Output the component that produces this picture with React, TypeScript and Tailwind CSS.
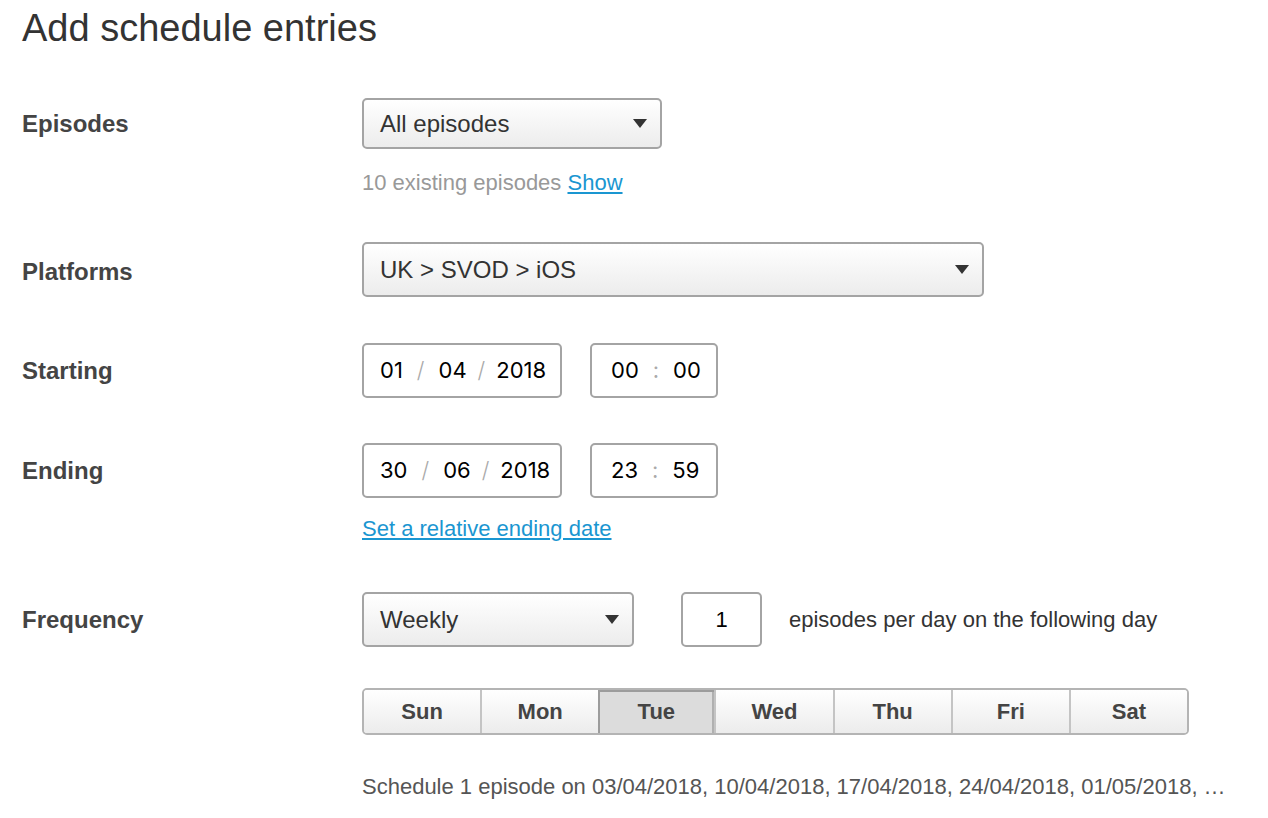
import React from 'react';

const labelCls = "w-[340px] shrink-0 flex items-center text-[24px] font-bold text-[#444]";

function Caret() {
  return (
    <svg width="14" height="9" viewBox="0 0 14 9" className="shrink-0">
      <path d="M0 0 H14 L7 9 Z" fill="#333" />
    </svg>
  );
}

function Select({ value, width, height }: { value: string; width: string; height: string }) {
  return (
    <div
      className={`${width} ${height} flex items-center justify-between pl-[16px] pr-[13px] rounded-[5px] border-2 border-[#a4a4a4] bg-gradient-to-b from-white to-[#ececec] text-[24px] text-[#333]`}
    >
      <span>{value}</span>
      <Caret />
    </div>
  );
}

function DateBox({ d, m, y }: { d: string; m: string; y: string }) {
  return (
    <div className="w-[200px] h-[55px] flex items-center pl-[16px] rounded-[5px] border-2 border-[#a4a4a4] bg-white font-['Inter',sans-serif] text-[22px] text-black">
      <span>{d}</span>
      <span className="mx-[14px] text-[#aaa] font-light">/</span>
      <span>{m}</span>
      <span className="mx-[11px] text-[#aaa] font-light">/</span>
      <span>{y}</span>
    </div>
  );
}

function TimeBox({ h, m }: { h: string; m: string }) {
  return (
    <div className="w-[128px] h-[55px] ml-[28px] flex items-center pl-[19px] rounded-[5px] border-2 border-[#a4a4a4] bg-white font-['Inter',sans-serif] text-[22px] text-black">
      <span>{h}</span>
      <span className="mx-[14px] text-[#aaa]">:</span>
      <span>{m}</span>
    </div>
  );
}

const days = ['Sun', 'Mon', 'Tue', 'Wed', 'Thu', 'Fri', 'Sat'];

export default function App() {
  return (
    <div className="min-h-[818px] bg-white pl-[22px] pt-[5px] font-['Liberation_Sans',Arial,sans-serif] text-[#333]">
      <h1 className="text-[38px] leading-[46px] text-[#333]">Add schedule entries</h1>

      {/* Episodes */}
      <div className="flex mt-[47px]">
        <div className={`${labelCls} h-[51px]`}>Episodes</div>
        <div>
          <Select value="All episodes" width="w-[300px]" height="h-[51px]" />
          <div className="mt-[21px] text-[22px] leading-[26px] text-[#999]">
            10 existing episodes{' '}
            <a href="#" className="text-[#1a96d1] underline">Show</a>
          </div>
        </div>
      </div>

      {/* Platforms */}
      <div className="flex mt-[46px]">
        <div className={`${labelCls} h-[55px] pt-[5px]`}>Platforms</div>
        <Select value="UK > SVOD > iOS" width="w-[622px]" height="h-[55px]" />
      </div>

      {/* Starting */}
      <div className="flex mt-[46px]">
        <div className={`${labelCls} h-[55px]`}>Starting</div>
        <DateBox d="01" m="04" y="2018" />
        <TimeBox h="00" m="00" />
      </div>

      {/* Ending */}
      <div className="flex mt-[45px]">
        <div className={`${labelCls} h-[55px]`}>Ending</div>
        <div>
          <div className="flex">
            <DateBox d="30" m="06" y="2018" />
            <TimeBox h="23" m="59" />
          </div>
          <div className="mt-[18px] text-[22px] leading-[26px]">
            <a href="#" className="text-[#1a96d1] underline">Set a relative ending date</a>
          </div>
        </div>
      </div>

      {/* Frequency */}
      <div className="flex mt-[50px]">
        <div className={`${labelCls} h-[55px]`}>Frequency</div>
        <div>
          <div className="flex items-center">
            <Select value="Weekly" width="w-[272px]" height="h-[55px]" />
            <div className="ml-[47px] w-[81px] h-[55px] flex items-center justify-center rounded-[5px] border-2 border-[#a4a4a4] bg-white text-[22px] text-black">
              1
            </div>
            <span className="ml-[27px] text-[22px] text-[#333]">episodes per day on the following day</span>
          </div>

          <div className="mt-[41px] flex w-[827px] h-[47px] rounded-[5px] border-2 border-[#b4b4b4] overflow-hidden">
            {days.map((d, i) => (
              <div
                key={d}
                className={
                  d === 'Tue'
                    ? 'flex-1 flex items-center justify-center bg-[#dcdcdc] shadow-[inset_2px_2px_0_#9c9c9c,inset_-2px_0_0_#b0b0b0] text-[22px] font-bold text-[#444]'
                    : `flex-1 flex items-center justify-center bg-gradient-to-b from-white to-[#ececec] text-[22px] font-bold text-[#444] ${i > 0 ? 'border-l-2 border-[#c4c4c4]' : ''}`
                }
              >
                {d}
              </div>
            ))}
          </div>

          <div className="mt-[39px] text-[22px] leading-[26px] text-[#555]">
            Schedule 1 episode on 03/04/2018, 10/04/2018, 17/04/2018, 24/04/2018, 01/05/2018, …
          </div>
        </div>
      </div>
    </div>
  );
}
